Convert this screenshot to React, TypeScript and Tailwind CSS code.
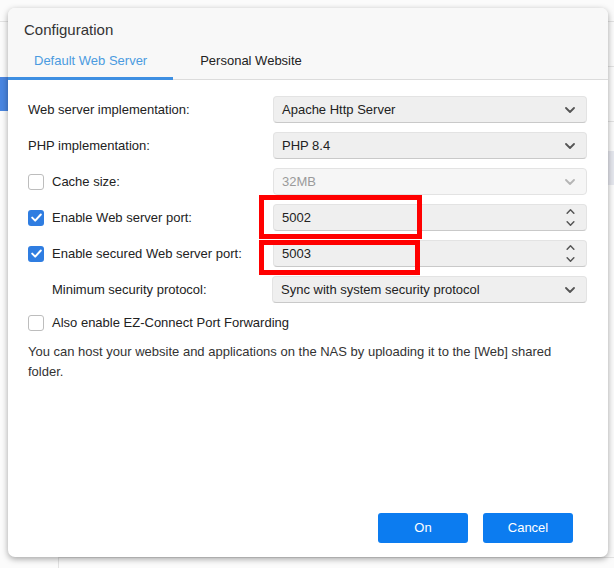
import React from 'react';

const font = { fontFamily: '"Liberation Sans", Arial, sans-serif' };

const Chevron: React.FC<{ up?: boolean; muted?: boolean; small?: boolean }> = ({ up, muted, small }) => (
  <svg width={small ? 9 : 10} height={small ? 5 : 6} viewBox="0 0 10 6" className={up ? 'rotate-180' : ''}>
    <path d="M1 1l4 4 4-4" fill="none" stroke={muted ? '#b5b5b5' : '#555'} strokeWidth="1.8" strokeLinecap="round" strokeLinejoin="round" />
  </svg>
);

const Select: React.FC<{ value: string; disabled?: boolean }> = ({ value, disabled }) => (
  <div
    className={`h-[27px] flex items-center justify-between pl-[8px] pr-[11px] rounded-[4px] border border-[#e3e3e3] border-b-[#c9c9c9] ${
      disabled ? 'bg-[#f6f6f6] text-[#9a9a9a] border-b-[#e3e3e3]' : 'bg-[#efefef] text-[#222]'
    }`}
  >
    <span>{value}</span>
    <Chevron muted={disabled} />
  </div>
);

const Spinner: React.FC<{ value: string }> = ({ value }) => (
  <div className="h-[27px] flex items-center justify-between pl-[8px] pr-[11px] rounded-[4px] border border-[#e3e3e3] border-b-[#c9c9c9] bg-[#efefef] text-[#222]">
    <span>{value}</span>
    <div className="flex flex-col gap-[7px]">
      <Chevron up small />
      <Chevron small />
    </div>
  </div>
);

const Check: React.FC<{ checked?: boolean }> = ({ checked }) =>
  checked ? (
    <span className="w-4 h-4 rounded-[3px] bg-[#2f7de1] flex items-center justify-center shrink-0">
      <svg width="11" height="9" viewBox="0 0 11 9">
        <path d="M1.2 4.6l3 3L9.8 1.5" fill="none" stroke="#fff" strokeWidth="2" strokeLinecap="round" strokeLinejoin="round" />
      </svg>
    </span>
  ) : (
    <span className="w-4 h-4 rounded-[3px] border border-[#bdbdbd] bg-white shrink-0" />
  );

export default function App() {
  return (
    <div className="relative w-[614px] h-[568px] overflow-hidden bg-[#fbfbfb] text-[13px]" style={font}>
      {/* page behind the dialog */}
      <div className="h-[22px] border-b border-[#e2e2e2]" />
      <div className="flex h-[546px]">
        <div className="w-[59px] border-r border-[#e2e2e2] flex flex-col">
          <div className="h-[55px]" />
          <div className="h-[34px] bg-[#4a86e0]" />
        </div>
        <div className="flex-1 flex flex-col">
          <div className="h-[45px] border-b border-[#e2e2e2]" />
          <div className="h-[55px] border-b border-[#e2e2e2]" />
          <div className="h-[29px]" />
          <div className="h-[34px] bg-[#e5e7ee]" />
          <div className="flex-1 border-b border-[#e2e2e2] mb-[10px]" />
        </div>
      </div>

      {/* dialog */}
      <div className="absolute left-2 top-2 w-[600px] h-[549px] bg-white rounded-[7px] shadow-[0_2px_6px_rgba(0,0,0,0.35)] flex flex-col overflow-hidden">
        <div className="bg-[#f8f8f8] border-b border-[#dcdcdc] pt-[12px] flex flex-col">
          <div className="pl-4 text-[15px] leading-[20px] text-[#333]">Configuration</div>
          <div className="flex mt-[6px] -mb-px">
            <div className="h-[34px] px-[26px] flex items-center pb-[1px] border-b-[3px] border-[#3e8fe2] text-[#4b9be0]">Default Web Server</div>
            <div className="h-[34px] px-[27px] flex items-center pb-[1px] border-b-[3px] border-transparent text-[#222]">Personal Website</div>
          </div>
        </div>

        <div className="flex-1 flex flex-col pl-5 pr-[21px] pt-4 text-[#222]">
          <div className="grid grid-cols-[245px_1fr] gap-y-[9px] items-center">
            <div>Web server implementation:</div>
            <Select value="Apache Http Server" />
            <div>PHP implementation:</div>
            <Select value="PHP 8.4" />
            <div className="flex items-center gap-2">
              <Check />
              <span>Cache size:</span>
            </div>
            <Select value="32MB" disabled />
            <div className="flex items-center gap-2">
              <Check checked />
              <span>Enable Web server port:</span>
            </div>
            <div className="relative">
              <Spinner value="5002" />
              <div className="absolute left-[-14px] top-[-9px] w-[163px] h-[44px] border-[5px] border-[#f00]" />
            </div>
            <div className="flex items-center gap-2">
              <Check checked />
              <span>Enable secured Web server port:</span>
            </div>
            <div className="relative">
              <Spinner value="5003" />
              <div className="absolute left-[-14px] top-[0px] w-[161px] h-[35px] border-[5px] border-[#f00]" />
            </div>
            <div className="pl-6">Minimum security protocol:</div>
            <div className="-ml-px">
              <Select value="Sync with system security protocol" />
            </div>
          </div>

          <div className="flex items-center gap-2 mt-[12px] h-4">
            <Check />
            <span>Also enable EZ-Connect Port Forwarding</span>
          </div>

          <p className="mt-[11px] leading-[20px] text-[#333]">
            You can host your website and applications on the NAS by uploading it to the [Web] shared folder.
          </p>

          <div className="flex-1" />
          <div className="flex justify-end gap-[15px] pr-[14px] pb-[14px]">
            <button className="w-[90px] h-[30px] rounded-[3px] bg-[#0c7cf0] text-white text-[13px]">On</button>
            <button className="w-[90px] h-[30px] rounded-[3px] bg-[#0c7cf0] text-white text-[13px]">Cancel</button>
          </div>
        </div>
      </div>
    </div>
  );
}
